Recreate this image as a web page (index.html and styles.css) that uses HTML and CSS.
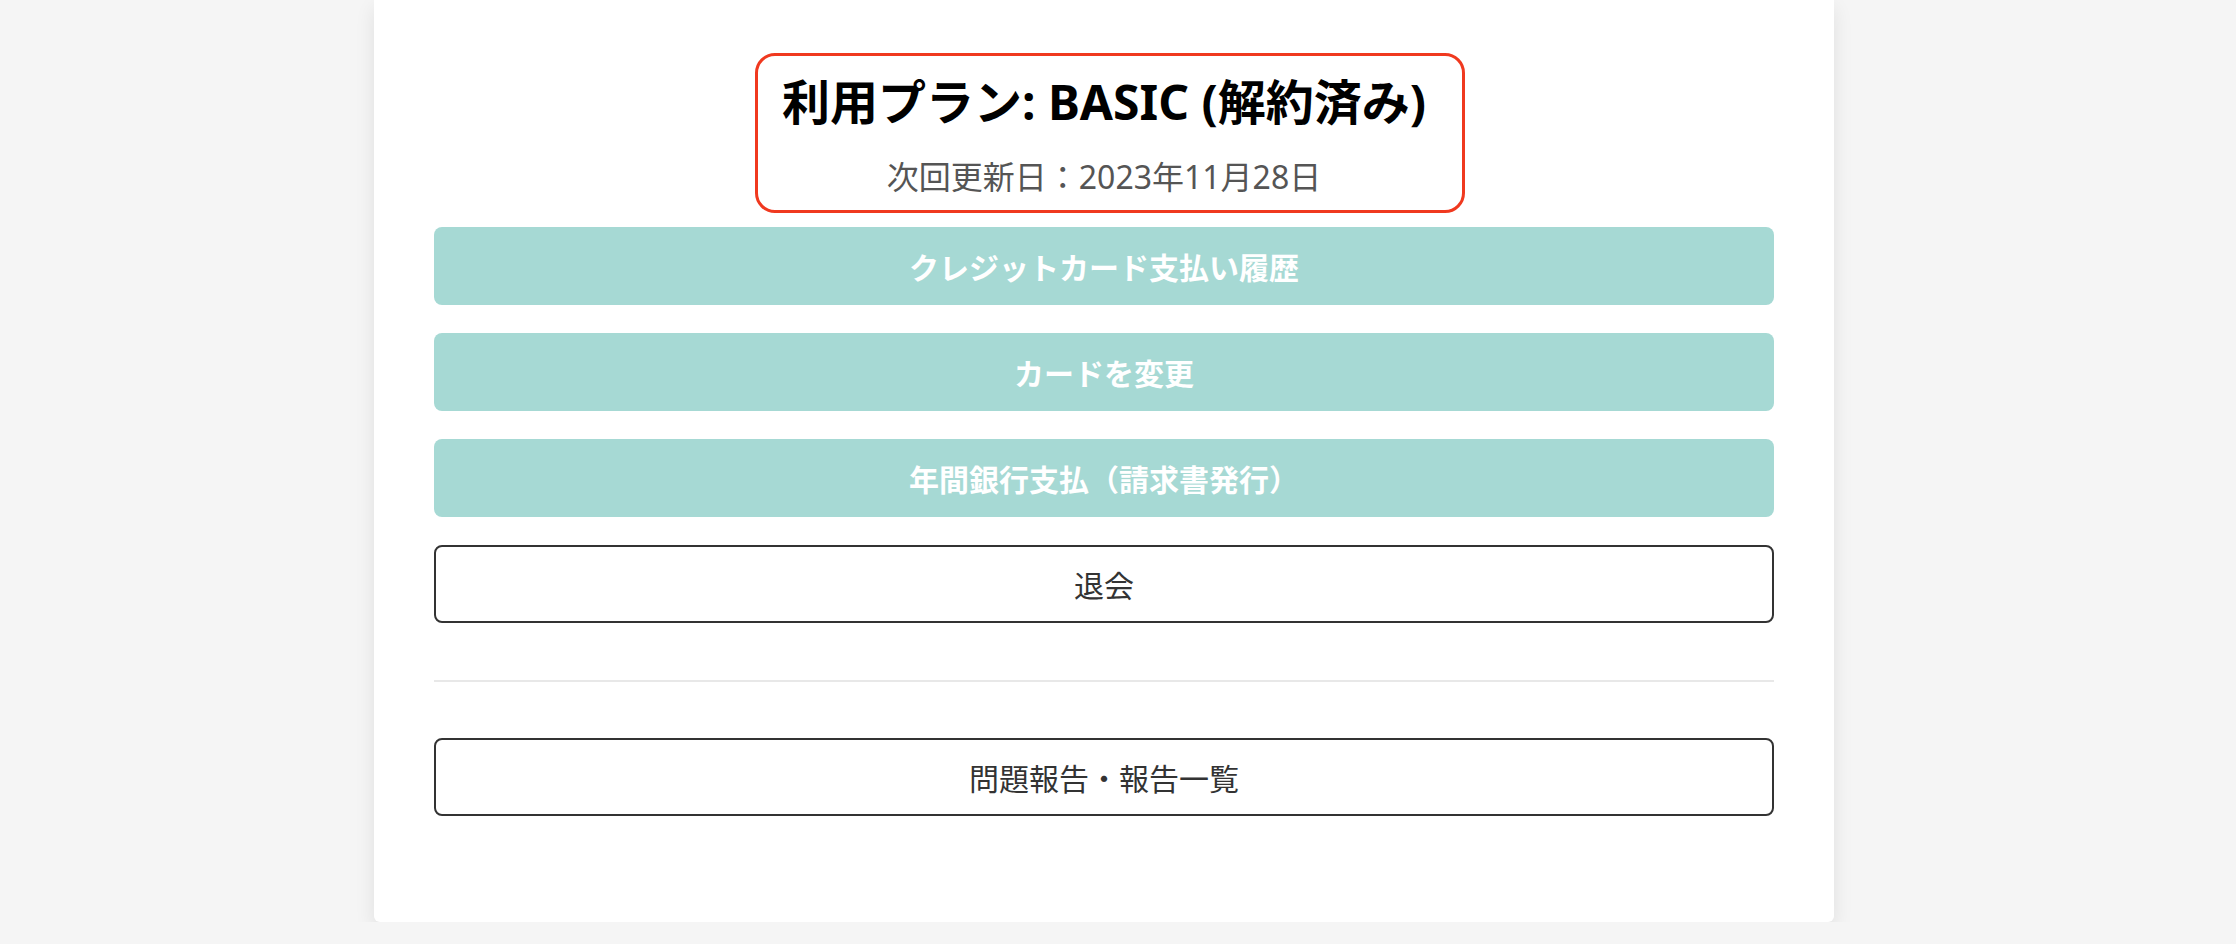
FILE: index.html
```html
<!DOCTYPE html>
<html lang="ja">
<head>
  <meta charset="utf-8">
  <title>プラン設定</title>
  <link rel="stylesheet" href="styles.css">
</head>
<body>
  <div class="card">
    <div class="plan-box">
      <h1 class="plan-title">利用プラン: BASIC (解約済み)</h1>
      <p class="plan-date">次回更新日：2023年11月28日</p>
    </div>

    <div class="actions">
      <a class="btn btn-fill">クレジットカード支払い履歴</a>
      <a class="btn btn-fill">カードを変更</a>
      <a class="btn btn-fill">年間銀行支払（請求書発行）</a>
      <a class="btn btn-line">退会</a>
    </div>

    <hr class="divider">

    <a class="btn btn-line">問題報告・報告一覧</a>
  </div>
</body>
</html>
```

FILE: styles.css
```css
/* プラン設定ページ */
body {
  margin: 0;
  padding: 0;
  background-color: #f5f5f5;
  font-family: "Noto Sans", "Noto Sans CJK JP", sans-serif;
  color: #333;
}

.card {
  width: 1340px;
  margin-left: 374px;
  padding: 53px 60px 106px;
  background-color: #fff;
  border-radius: 0 0 6px 6px;
  box-shadow: 0 8px 20px rgba(0, 0, 0, 0.09);
}

.plan-box {
  width: 692px;
  margin: 0 0 14px 321px;
  padding: 16px 12px 11px 0;
  border: 3px solid #f0391f;
  border-radius: 20px;
  text-align: center;
}

.plan-title {
  margin: 0;
  font-size: 48px;
  line-height: 60px;
  font-weight: 700;
  color: #000;
}

.plan-date {
  margin: 22px 0 0;
  font-size: 32px;
  line-height: 45px;
  color: #555;
}

.actions {
  display: flex;
  flex-direction: column;
  gap: 28px;
}

.btn {
  display: flex;
  align-items: center;
  justify-content: center;
  box-sizing: border-box;
  height: 78px;
  border-radius: 8px;
  font-size: 30px;
  cursor: pointer;
}

.btn-fill {
  background-color: #a6d9d4;
  color: #fff;
  font-weight: 700;
}

.btn-line {
  background-color: #fff;
  border: 2px solid #333;
  color: #333;
}

.divider {
  margin: 57px 0 56px;
  border: none;
  border-top: 2px solid #e8e8e8;
}
```
